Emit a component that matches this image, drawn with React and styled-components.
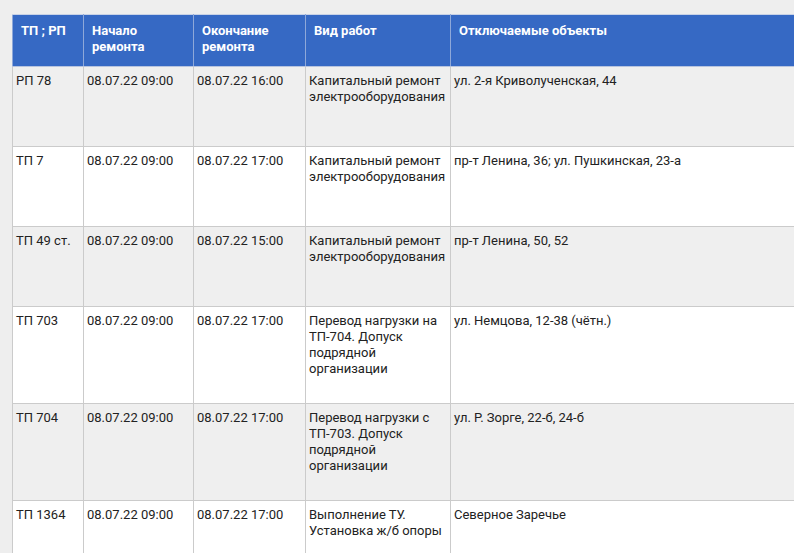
import React from "react";
import styled, { createGlobalStyle } from "styled-components";

const Global = createGlobalStyle`
  html, body { margin: 0; padding: 0; background: #eeeeee; }
  body { font-family: Roboto, "Noto Sans", "Liberation Sans", sans-serif; overflow: hidden; }
`;

const Page = styled.div`
  padding: 14px 0 0 12px;
`;

const Table = styled.table`
  border-collapse: collapse;
  width: 782px;
  table-layout: fixed;
  font-size: 13px;
  line-height: 16px;
  color: #222;
`;

const HeadCell = styled.th`
  background: #3669c4;
  color: #fff;
  font-weight: 700;
  text-align: left;
  vertical-align: top;
  padding: 8px 8px 11px 8px;
  border: 1px solid #8ea8d9;
  border-top-color: #c8d2e6;
  border-bottom-color: #b7c4df;
`;

const Row = styled.tr`
  background: ${(p) => (p.$alt ? "#efefef" : "#ffffff")};
  height: 80px;
`;

const Cell = styled.td`
  vertical-align: top;
  padding: 6px 4px 26px 3px;
  border: 1px solid #cbcbcb;
  overflow: hidden;
`;

const cols = [71, 110, 112, 145, 344];

const headers = [
  "ТП ; РП",
  "Начало ремонта",
  "Окончание ремонта",
  "Вид работ",
  "Отключаемые объекты",
];

const rows = [
  ["РП 78", "08.07.22 09:00", "08.07.22 16:00", "Капитальный ремонт электрооборудования", "ул. 2-я Криволученская, 44"],
  ["ТП 7", "08.07.22 09:00", "08.07.22 17:00", "Капитальный ремонт электрооборудования", "пр-т Ленина, 36; ул. Пушкинская, 23-а"],
  ["ТП 49 ст.", "08.07.22 09:00", "08.07.22 15:00", "Капитальный ремонт электрооборудования", "пр-т Ленина, 50, 52"],
  ["ТП 703", "08.07.22 09:00", "08.07.22 17:00", "Перевод нагрузки на ТП-704. Допуск подрядной организации", "ул. Немцова, 12-38 (чётн.)"],
  ["ТП 704", "08.07.22 09:00", "08.07.22 17:00", "Перевод нагрузки с ТП-703. Допуск подрядной организации", "ул. Р. Зорге, 22-б, 24-б"],
  ["ТП 1364", "08.07.22 09:00", "08.07.22 17:00", "Выполнение ТУ. Установка ж/б опоры", "Северное Заречье"],
];

export default function App() {
  return (
    <Page>
      <Global />
      <Table>
        <colgroup>
          {cols.map((w, i) => (
            <col key={i} style={{ width: w }} />
          ))}
        </colgroup>
        <thead>
          <tr>
            {headers.map((h) => (
              <HeadCell key={h}>{h}</HeadCell>
            ))}
          </tr>
        </thead>
        <tbody>
          {rows.map((r, i) => (
            <Row key={i} $alt={i % 2 === 0}>
              {r.map((c, j) => (
                <Cell key={j}>{c}</Cell>
              ))}
            </Row>
          ))}
        </tbody>
      </Table>
    </Page>
  );
}
